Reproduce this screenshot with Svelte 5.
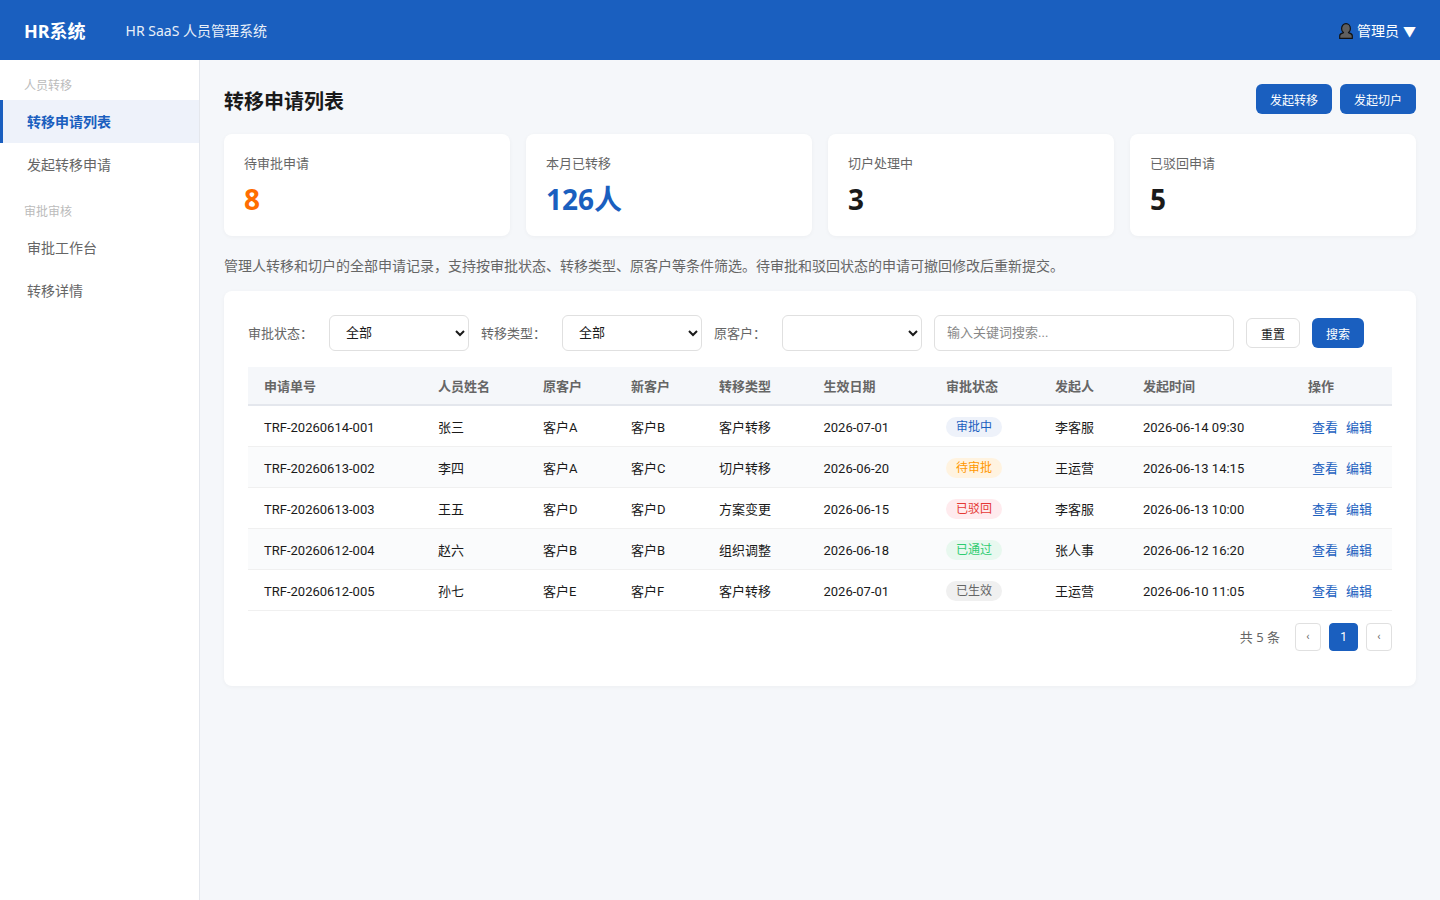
<script>
  const rows = [
    { no: 'TRF-20260614-001', name: '张三', from: '客户A', to: '客户B', type: '客户转移', date: '2026-07-01', status: '审批中', cls: 'st-blue', by: '李客服', at: '2026-06-14 09:30' },
    { no: 'TRF-20260613-002', name: '李四', from: '客户A', to: '客户C', type: '切户转移', date: '2026-06-20', status: '待审批', cls: 'st-orange', by: '王运营', at: '2026-06-13 14:15' },
    { no: 'TRF-20260613-003', name: '王五', from: '客户D', to: '客户D', type: '方案变更', date: '2026-06-15', status: '已驳回', cls: 'st-red', by: '李客服', at: '2026-06-13 10:00' },
    { no: 'TRF-20260612-004', name: '赵六', from: '客户B', to: '客户B', type: '组织调整', date: '2026-06-18', status: '已通过', cls: 'st-green', by: '张人事', at: '2026-06-12 16:20' },
    { no: 'TRF-20260612-005', name: '孙七', from: '客户E', to: '客户F', type: '客户转移', date: '2026-07-01', status: '已生效', cls: 'st-gray', by: '王运营', at: '2026-06-10 11:05' }
  ];
  const stats = [
    { label: '待审批申请', value: '8', cls: 'orange' },
    { label: '本月已转移', value: '126人', cls: 'blue' },
    { label: '切户处理中', value: '3', cls: '' },
    { label: '已驳回申请', value: '5', cls: '' }
  ];
  const cols = ['申请单号', '人员姓名', '原客户', '新客户', '转移类型', '生效日期', '审批状态', '发起人', '发起时间', '操作'];
  const widths = [174, 105, 88, 88, 104.5, 122.5, 109, 88, 165, 100];
</script>

<header class="topbar">
  <div class="logo">HR系统</div>
  <div class="subtitle">HR SaaS 人员管理系统</div>
  <div class="user">
    <svg width="14" height="16" viewBox="0 0 14 16" aria-hidden="true">
      <path d="M0.7 15.4v-2.6c0-1.7 1.6-2.5 3.8-3.2-1.2-.9-1.9-2.2-1.9-3.9 0-2.8 1.8-5 4.4-5s4.4 2.2 4.4 5c0 1.7-.7 3-1.9 3.9 2.2.7 3.8 1.5 3.8 3.2v2.6z" fill="#5f5f5f" stroke="#111" stroke-width="1.2" stroke-linejoin="round" />
    </svg>
    <span>管理员</span>
    <span class="caret">▼</span>
  </div>
</header>

<div class="layout">
  <aside class="sidebar">
    <div class="group">人员转移</div>
    <div class="item active">转移申请列表</div>
    <div class="item">发起转移申请</div>
    <div class="group second">审批审核</div>
    <div class="item">审批工作台</div>
    <div class="item">转移详情</div>
  </aside>

  <main class="main">
    <div class="page-head">
      <h1>转移申请列表</h1>
      <div class="actions">
        <button class="btn primary">发起转移</button>
        <button class="btn primary">发起切户</button>
      </div>
    </div>

    <div class="stats">
      {#each stats as s}
        <div class="stat">
          <div class="stat-label">{s.label}</div>
          <div class="stat-value {s.cls}">{s.value}</div>
        </div>
      {/each}
    </div>

    <p class="desc">管理人转移和切户的全部申请记录，支持按审批状态、转移类型、原客户等条件筛选。待审批和驳回状态的申请可撤回修改后重新提交。</p>

    <section class="card">
      <div class="filters">
        <label for="f1">审批状态：</label>
        <select id="f1"><option>全部</option></select>
        <label for="f2">转移类型：</label>
        <select id="f2"><option>全部</option></select>
        <label for="f3">原客户：</label>
        <select id="f3"><option></option></select>
        <input type="text" placeholder="输入关键词搜索..." />
        <button class="btn">重置</button>
        <button class="btn primary">搜索</button>
      </div>

      <table>
        <colgroup>
          {#each widths as w}<col style="width: {w}px" />{/each}
        </colgroup>
        <thead>
          <tr>{#each cols as c}<th>{c}</th>{/each}</tr>
        </thead>
        <tbody>
          {#each rows as r}
            <tr>
              <td class="num">{r.no}</td>
              <td>{r.name}</td>
              <td>{r.from}</td>
              <td>{r.to}</td>
              <td>{r.type}</td>
              <td class="num">{r.date}</td>
              <td><span class="badge {r.cls}">{r.status}</span></td>
              <td>{r.by}</td>
              <td class="num">{r.at}</td>
              <td class="ops"><span class="link">查看</span><span class="link">编辑</span></td>
            </tr>
          {/each}
        </tbody>
      </table>

      <div class="pager">
        <span class="total">共 5 条</span>
        <button class="page">‹</button>
        <button class="page current">1</button>
        <button class="page">‹</button>
      </div>
    </section>
  </main>
</div>

<style>
  :global(body) {
    background: #f5f7fa;
    font-family: Roboto, "Noto Sans CJK SC", sans-serif;
    color: #1a1a1a;
  }

  .topbar {
    height: 60px;
    background: #1a5fbf;
    color: #fff;
    display: flex;
    align-items: center;
    padding: 0 24px;
    font-family: "Noto Sans", "Noto Sans CJK SC", sans-serif;
  }

  .logo { font-size: 18px; font-weight: 700; margin-right: 40px; }
  .subtitle { font-size: 14px; opacity: 0.9; }
  .user { margin-left: auto; font-size: 14px; display: flex; align-items: center; gap: 4px; }
  .user svg { display: block; margin-top: 1px; }
  .caret { font-size: 13px; }

  .layout { display: flex; min-height: 840px; }

  .sidebar {
    width: 200px;
    box-sizing: border-box;
    background: #fff;
    border-right: 1px solid #e4e7ed;
    padding-top: 16px;
    flex-shrink: 0;
  }

  .group {
    font-size: 12px;
    color: #bbb;
    box-sizing: border-box;
    padding: 1px 24px 0;
    height: 24px;
    line-height: 18px;
  }
  .group.second { margin-top: 16px; }

  .item {
    box-sizing: border-box;
    height: 43px;
    line-height: 43px;
    font-size: 14px;
    color: #666;
    padding: 1px 0 0 27px;
  }
  .item.active {
    background: #eef2fa;
    color: #1a5fbf;
    font-weight: 600;
    box-shadow: inset 3px 0 0 #1a5fbf;
  }

  .main { flex: 1; min-width: 0; padding: 24px; }

  .page-head {
    display: flex;
    align-items: center;
    justify-content: space-between;
    height: 30px;
    margin-bottom: 20px;
  }
  h1 { font-size: 20px; font-weight: 700; margin: 0; padding-top: 3px; }
  .actions { display: flex; gap: 8px; }

  .btn {
    height: 30px;
    padding: 0 14px;
    font-size: 12px;
    font-family: inherit;
    border-radius: 6px;
    border: 1px solid #e0e0e0;
    background: #fff;
    color: #1a1a1a;
  }
  .btn.primary { background: #1a5fbf; border: none; color: #fff; }

  .stats {
    display: grid;
    grid-template-columns: repeat(4, 1fr);
    gap: 16px;
  }
  .stat {
    background: #fff;
    border-radius: 8px;
    height: 102px;
    box-sizing: border-box;
    padding: 20px;
    box-shadow: 0 1px 4px rgba(0, 0, 0, 0.04);
  }
  .stat-label { font-size: 13px; color: #666; line-height: 18px; margin: 1px 0 7px; }
  .stat-value { font-size: 28px; font-weight: 700; line-height: 38px; font-family: "Noto Sans", "Noto Sans CJK SC", sans-serif; }
  .stat-value.orange { color: #ff6d00; }
  .stat-value.blue { color: #1a5fbf; }

  .desc { font-size: 14px; color: #666; line-height: 20px; margin: 20px 0 15px; }

  .card {
    background: #fff;
    border-radius: 8px;
    padding: 24px;
    box-shadow: 0 1px 4px rgba(0, 0, 0, 0.04);
  }

  .filters {
    display: flex;
    align-items: center;
    gap: 12px;
    margin-bottom: 16px;
  }
  .filters label { font-size: 13px; color: #666; padding: 0 4px 2px 0; }
  select, input {
    height: 36px;
    box-sizing: border-box;
    border: 1px solid #e0e0e0;
    border-radius: 6px;
    background: #fff;
    font-family: inherit;
    font-size: 13px;
    color: #1a1a1a;
    padding: 0 12px 2px;
  }
  select { width: 140px; }
  input { width: 300px; }
  input::placeholder { color: #888; }

  table { width: 100%; border-collapse: collapse; table-layout: fixed; font-size: 13px; }
  th {
    background: #f5f7fa;
    color: #666;
    font-weight: 600;
    text-align: left;
    height: 38px;
    padding: 0 16px;
    border-bottom: 2px solid #e4e7ed;
    box-sizing: border-box;
  }
  td {
    height: 41px;
    padding: 2px 16px 0;
    border-bottom: 1px solid #f0f0f0;
    box-sizing: border-box;
    white-space: nowrap;
  }
  td.num { padding-top: 4px; }
  tbody tr:nth-child(even) { background: #fafbfc; }

  .badge {
    display: inline-block;
    font-size: 12px;
    line-height: 20px;
    padding: 0 10px;
    border-radius: 10px;
  }
  .st-blue { background: #eef2fa; color: #1a5fbf; }
  .st-orange { background: #fff3e0; color: #ff9800; }
  .st-red { background: #ffebee; color: #e53935; }
  .st-green { background: #e8f8ef; color: #2ecc71; }
  .st-gray { background: #f0f0f0; color: #666; }

  .ops { padding-left: 20px; }
  .link { color: #1a5fbf; margin-right: 8px; }

  .pager {
    display: flex;
    align-items: center;
    justify-content: flex-end;
    gap: 8px;
    margin: 12px 0 11px;
  }
  .total { font-size: 13px; color: #666; margin-right: 7px; font-family: "Noto Sans", "Noto Sans CJK SC", sans-serif; }
  .page {
    width: 26px;
    height: 28px;
    padding: 0;
    border: 1px solid #e0e0e0;
    border-radius: 4px;
    background: #fff;
    color: #666;
    font-size: 11px;
    font-family: inherit;
  }
  .page.current {
    width: 29px;
    font-size: 12px;
    background: #1a5fbf;
    border-color: #1a5fbf;
    color: #fff;
  }
</style>
